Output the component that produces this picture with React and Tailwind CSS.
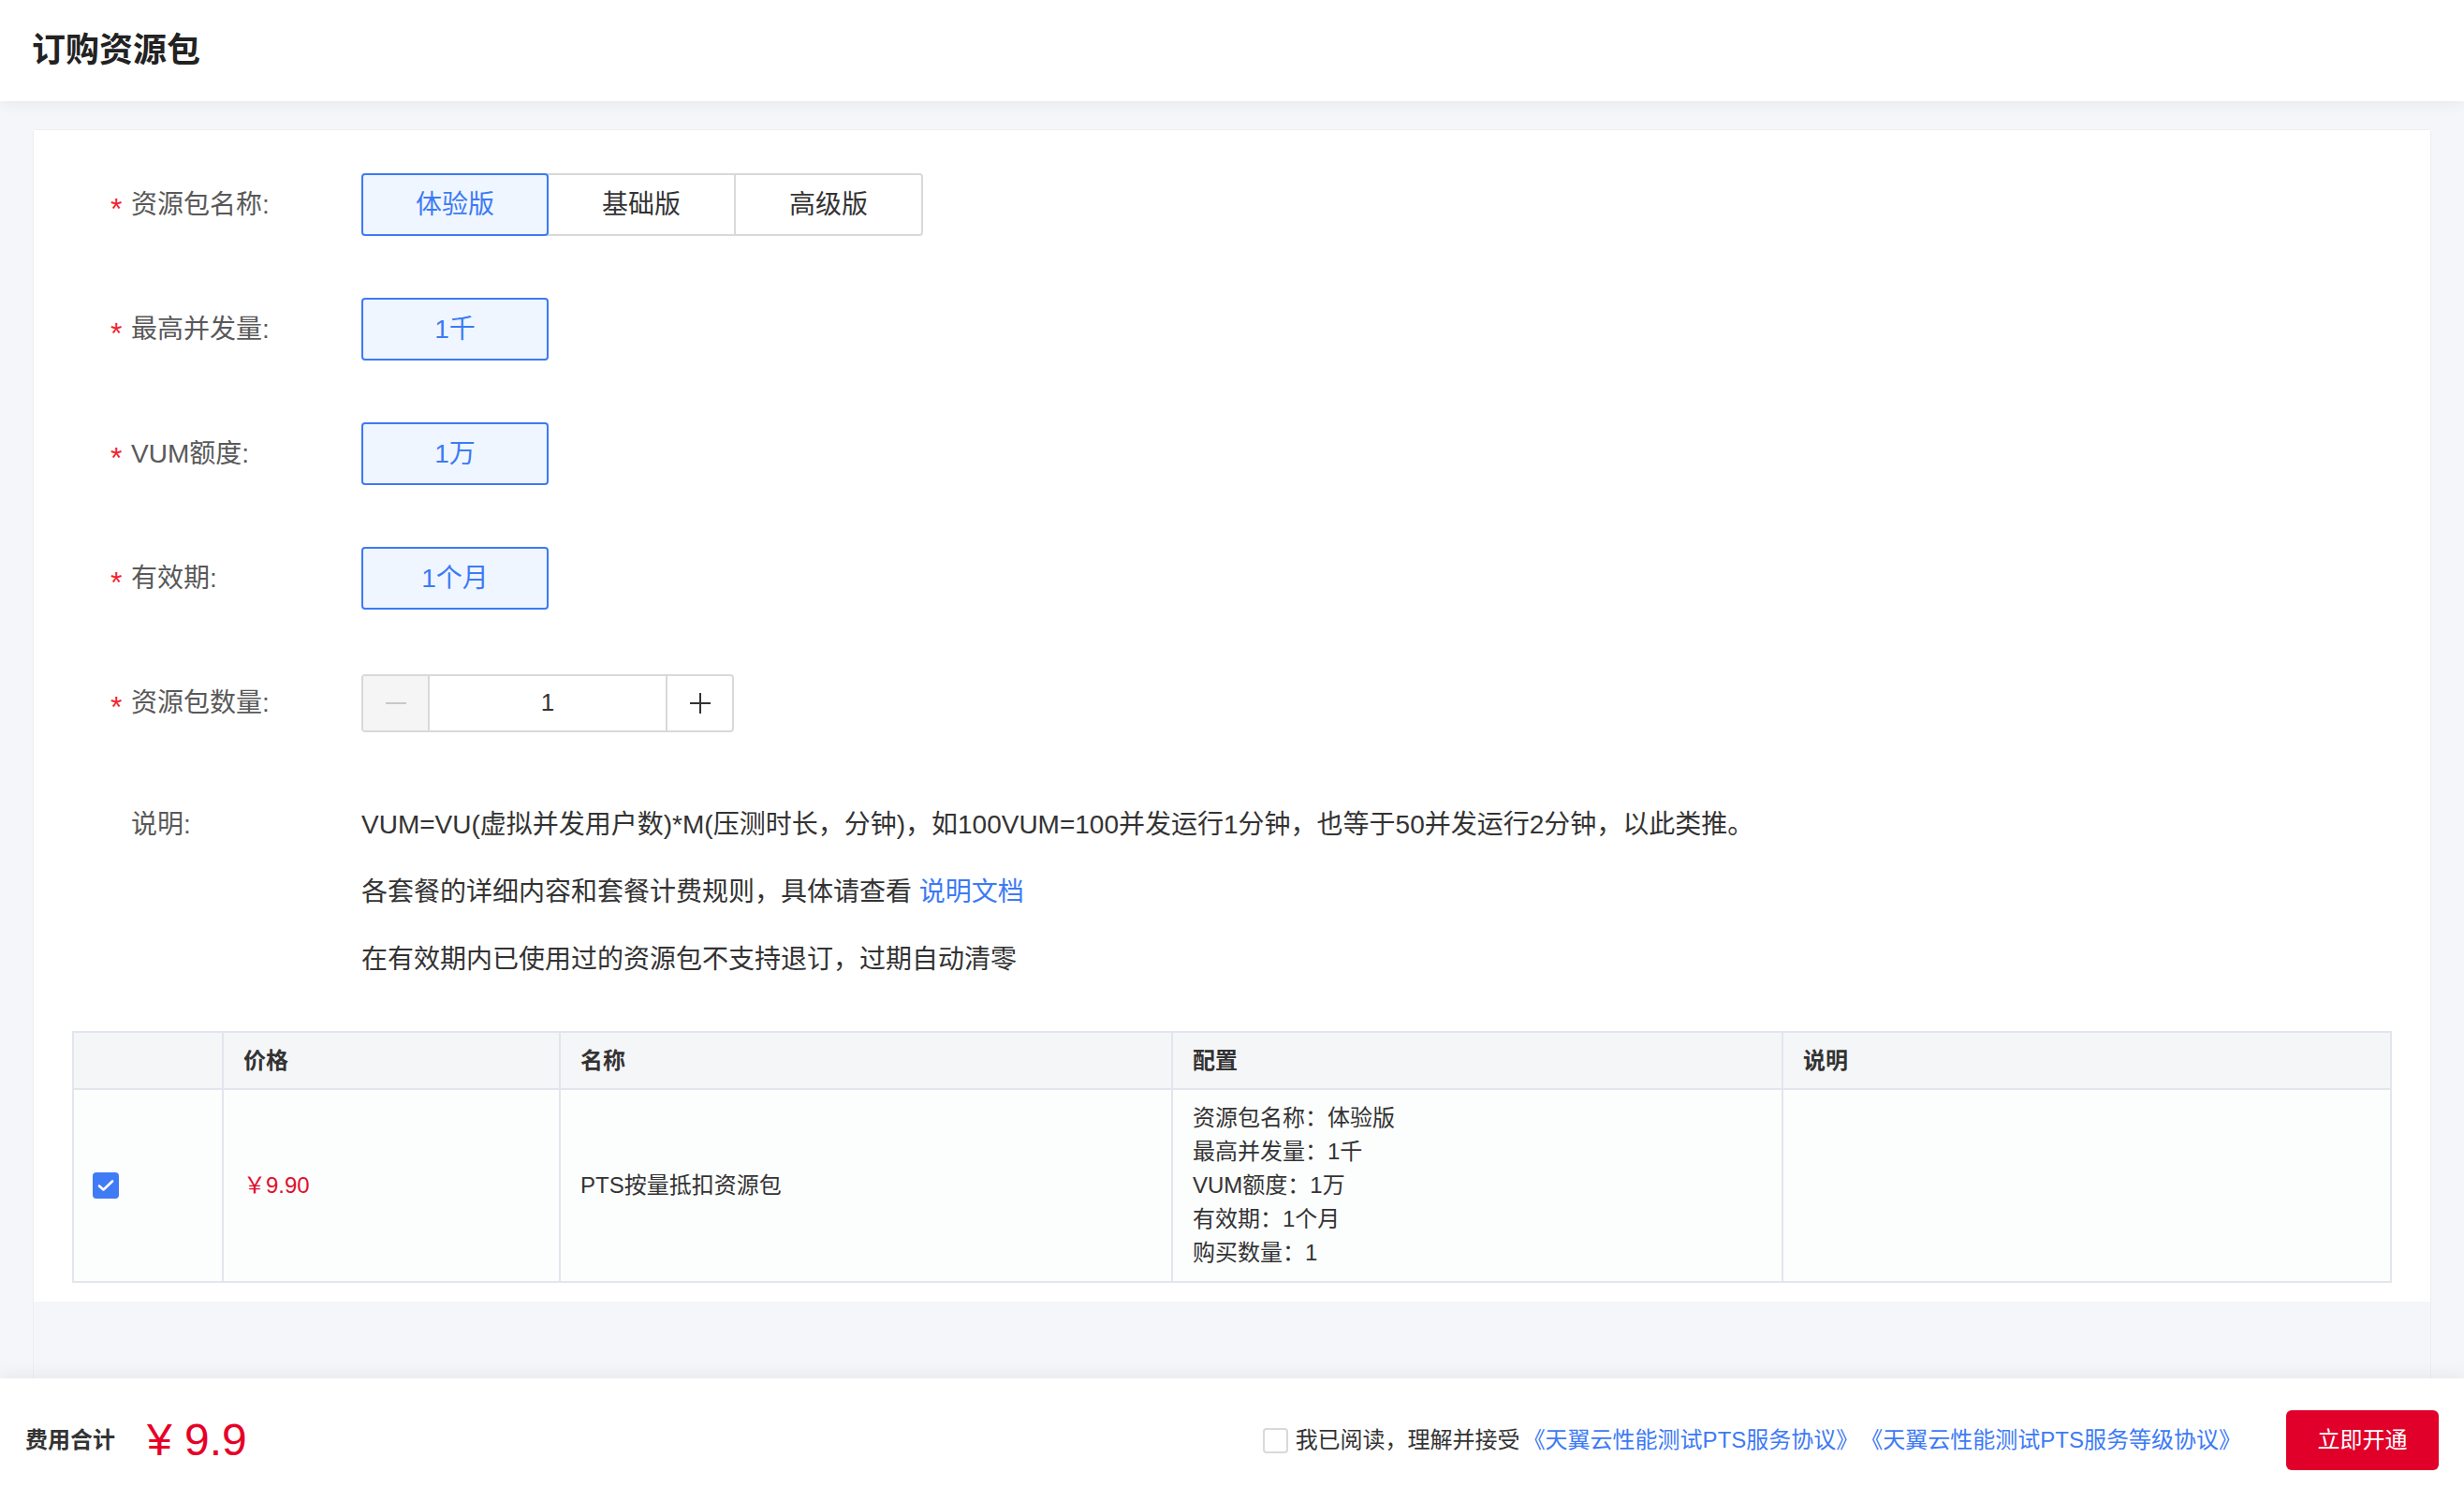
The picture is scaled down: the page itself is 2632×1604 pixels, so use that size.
import React from 'react';

const FONT = { fontFamily: '"Liberation Sans", "Noto Sans CJK SC", sans-serif' };

const Label = ({ required, children }) => (
  <div className="flex items-center h-[67px] w-[268px] shrink-0 text-[28px] text-[#595959]">
    <span className="w-[22px] text-[#f5222d] text-[32px] leading-none pt-[8px]">{required ? '*' : ''}</span>
    <span>{children}</span>
  </div>
);

const Option = ({ active, children, className = '' }) => (
  <div
    className={
      active
        ? `w-[200px] h-[67px] flex items-center justify-center border-2 border-[#3d7af5] bg-[#eff6ff] text-[#3d7af5] rounded-[4px] text-[28px] relative z-10 ${className}`
        : `w-[202px] h-[67px] flex items-center justify-center border-2 border-[#d9d9d9] bg-white text-[#333] text-[28px] -ml-[2px] ${className}`
    }
  >
    {children}
  </div>
);

const Row = ({ label, children, className = '' }) => (
  <div className={`flex items-center h-[67px] ${className}`}>
    <Label required>{label}</Label>
    {children}
  </div>
);

const CheckIcon = () => (
  <svg width="18" height="14" viewBox="0 0 18 14" fill="none">
    <path d="M2 7.5 L6.5 11.5 L16 2.5" stroke="white" strokeWidth="2.6" strokeLinecap="round" strokeLinejoin="round" />
  </svg>
);

export default function App() {
  return (
    <div className="w-full h-[1604px] flex flex-col bg-[#f5f6f9] overflow-hidden" style={FONT}>
      {/* Header */}
      <div className="h-[108px] shrink-0 bg-white flex items-center px-[34px] shadow-[0_4px_14px_rgba(0,0,0,0.05)] relative z-10">
        <h1 className="text-[36px] font-bold text-[#222]">订购资源包</h1>
      </div>

      {/* Main */}
      <div className="flex-1 px-[35px] pt-[30px] flex flex-col">
        <div className="flex-1 flex flex-col border border-[#eceef3] border-b-0 rounded-t-[4px]">
          <div className="bg-white pt-[46px] pb-[20px] px-[41px]">
            <div className="pl-[41px]">
              <Row label="资源包名称:">
                <div className="flex">
                  <Option active>体验版</Option>
                  <Option>基础版</Option>
                  <Option className="rounded-r-[4px]">高级版</Option>
                </div>
              </Row>
              <Row label="最高并发量:" className="mt-[66px]">
                <Option active>1千</Option>
              </Row>
              <Row label="VUM额度:" className="mt-[66px]">
                <Option active>1万</Option>
              </Row>
              <Row label="有效期:" className="mt-[66px]">
                <Option active>1个月</Option>
              </Row>
              <Row label="资源包数量:" className="mt-[66px]">
                <div className="flex h-[62px] w-[398px] border-2 border-[#d9d9d9] rounded-[4px] overflow-hidden">
                  <div className="w-[71px] bg-[#f5f5f5] border-r-2 border-[#d9d9d9] flex items-center justify-center">
                    <div className="w-[22px] h-[2px] bg-[#c8c8c8]" />
                  </div>
                  <div className="flex-1 flex items-center justify-center text-[26px] text-[#333]">1</div>
                  <div className="w-[71px] border-l-2 border-[#d9d9d9] flex items-center justify-center relative">
                    <div className="w-[22px] h-[2px] bg-[#333]" />
                    <div className="absolute w-[2px] h-[22px] bg-[#333]" />
                  </div>
                </div>
              </Row>

              <div className="flex items-start mt-[61px] text-[28px] leading-[72px]">
                <div className="flex items-center h-[72px] w-[268px] shrink-0 text-[#595959]">
                  <span className="w-[22px]" />
                  <span>说明:</span>
                </div>
                <div className="text-[#333]">
                  <p>VUM=VU(虚拟并发用户数)*M(压测时长，分钟)，如100VUM=100并发运行1分钟，也等于50并发运行2分钟，以此类推。</p>
                  <p>
                    各套餐的详细内容和套餐计费规则，具体请查看 <span className="text-[#3d7af5]">说明文档</span>
                  </p>
                  <p>在有效期内已使用过的资源包不支持退订，过期自动清零</p>
                </div>
              </div>
            </div>

            {/* Table */}
            <table className="mt-[40px] w-full border-collapse text-[24px] text-[#333] table-fixed">
              <colgroup>
                <col className="w-[160px]" />
                <col className="w-[360px]" />
                <col className="w-[654px]" />
                <col className="w-[652px]" />
                <col />
              </colgroup>
              <thead>
                <tr className="h-[61px] bg-[#f5f6f8]">
                  <th className="border-2 border-[#e3e5ed]" />
                  <th className="border-2 border-[#e3e5ed] text-left font-bold pl-[21px]">价格</th>
                  <th className="border-2 border-[#e3e5ed] text-left font-bold pl-[21px]">名称</th>
                  <th className="border-2 border-[#e3e5ed] text-left font-bold pl-[21px]">配置</th>
                  <th className="border-2 border-[#e3e5ed] text-left font-bold pl-[21px]">说明</th>
                </tr>
              </thead>
              <tbody>
                <tr className="h-[206px] bg-[#fcfdfd]">
                  <td className="border-2 border-[#e3e5ed] pl-[20px]">
                    <div className="w-[28px] h-[28px] rounded-[4px] bg-[#3f7bf5] flex items-center justify-center">
                      <CheckIcon />
                    </div>
                  </td>
                  <td className="border-2 border-[#e3e5ed] pl-[21px] text-[#e0102d]">￥9.90</td>
                  <td className="border-2 border-[#e3e5ed] pl-[21px]">PTS按量抵扣资源包</td>
                  <td className="border-2 border-[#e3e5ed] pl-[21px] leading-[36px]">
                    <div>资源包名称：体验版</div>
                    <div>最高并发量：1千</div>
                    <div>VUM额度：1万</div>
                    <div>有效期：1个月</div>
                    <div>购买数量：1</div>
                  </td>
                  <td className="border-2 border-[#e3e5ed]" />
                </tr>
              </tbody>
            </table>
          </div>
          <div className="flex-1" />
        </div>
      </div>

      {/* Footer */}
      <div className="h-[132px] shrink-0 bg-white flex items-center px-[27px] shadow-[0_-6px_16px_rgba(0,0,0,0.05)] relative z-10">
        <span className="text-[24px] font-bold text-[#333]">费用合计</span>
        <span className="ml-[34px] text-[48px] text-[#e60027]">¥ 9.9</span>
        <div className="ml-auto flex items-center text-[24px]">
          <div className="w-[27px] h-[27px] border-2 border-[#d9d9d9] rounded-[4px] bg-white" />
          <span className="ml-[8px] text-[#333]">我已阅读，理解并接受</span>
          <span className="ml-[3px] text-[#3d7af5]">《天翼云性能测试PTS服务协议》</span>
          <span className="ml-[2px] text-[#3d7af5]">《天翼云性能测试PTS服务等级协议》</span>
          <button className="ml-[48px] w-[163px] h-[64px] bg-[#e1002a] text-white rounded-[6px] text-[24px]">立即开通</button>
        </div>
      </div>
    </div>
  );
}
